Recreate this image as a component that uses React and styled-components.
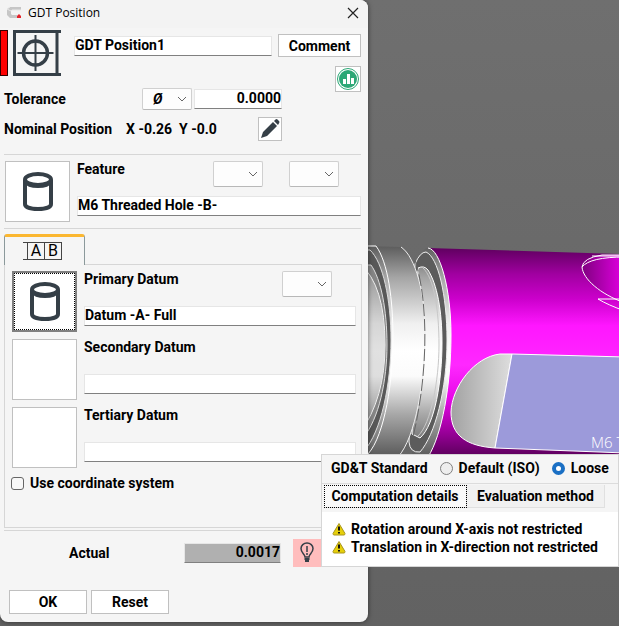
import React, { useState } from "react";
import styled, { createGlobalStyle } from "styled-components";

// STYLED COMPONENTS
const GlobalStyle = createGlobalStyle`
  * {
    box-sizing: border-box;
  }
  body {
    margin: 0;
    background: #696969;
    color: #000;
    font-family: Roboto, "Liberation Sans", sans-serif;
    font-size: 14px;
    font-weight: 700;
    line-height: 18px;
  }
  button, input, select {
    margin: 0;
    color: inherit;
    font: inherit;
  }
`;
const Page = styled.main`
  position: relative;
  min-height: 100vh;
  overflow: hidden;
`;
const Viewport = styled.svg`
  position: absolute;
  inset: 0;
  width: 100%;
  height: 100%;
`;
const Dialog = styled.section`
  position: relative;
  width: 100%;
  max-width: 368px;
  background: #f5f5f5;
  border-radius: 0 8px 8px 8px;
  box-shadow: 0 0 5px rgba(0, 0, 0, 0.5);
`;
const TitleBar = styled.header`
  display: flex;
  align-items: center;
  gap: 6px;
  height: 28px;
  padding: 0 8px 2px 6px;
  background: #f3f3f3;
  border-radius: 0 8px 0 0;
`;
const Title = styled.h1`
  flex: 1;
  margin: 0;
  font-family: "Open Sans", "Noto Sans", sans-serif;
  font-size: 12px;
  font-weight: 400;
`;
const CloseButton = styled.button`
  display: flex;
  padding: 1px;
  border: none;
  background: none;
`;
const Head = styled.div`
  display: grid;
  grid-template-columns: 1fr 83px;
  grid-template-rows: 58px auto;
  column-gap: 6px;
  padding: 2px 7px 0 0;
`;
const Identity = styled.div`
  display: flex;
  align-items: flex-start;
  gap: 5px;
`;
const Status = styled.div`
  width: 8px;
  height: 46px;
  background: #f00;
  border: 1px solid #300;
`;
const NameField = styled.div`
  flex: 1;
  padding: 6px 0 0 8px;
`;
const Actions = styled.div`
  grid-column: 2;
  grid-row: 1 / 3;
  align-self: start;
  display: flex;
  flex-direction: column;
  align-items: flex-end;
  gap: 9px;
  padding-top: 4px;
`;
const Button = styled.button`
  width: ${(p) => p.$width};
  height: ${(p) => p.$height || "24px"};
  padding: 0;
  background: #fff;
  border: 1px solid #c0c0c0;
`;
const IconButton = styled.button`
  display: grid;
  place-items: center;
  width: ${(p) => p.$size};
  height: ${(p) => p.$size};
  padding: 0;
  background: #fff;
  border: 1px solid #c0c0c0;
`;
const Input = styled.input`
  display: block;
  width: ${(p) => p.$width || "100%"};
  height: 20px;
  padding: 0 0 2px;
  outline: none;
  border: 1px solid #e6e6e6;
  border-bottom-color: #808080;
  border-radius: 0;
  background: ${(p) => (p.readOnly ? "#b0b0b0" : "#fff")};
  text-align: ${(p) => p.$align || "left"};
`;
const Fields = styled.div`
  grid-column: 1 / 3;
  grid-row: 2;
  width: 278px;
  margin-left: 4px;
`;
const FieldRow = styled.div`
  display: flex;
  align-items: center;
  gap: ${(p) => p.$gap};
  height: ${(p) => p.$height};
`;
const Label = styled.label`
  flex: 1;
  line-height: 16px;
`;
const Text = styled.span`
  white-space: pre;
`;
const SelectBox = styled.div`
  position: relative;
  width: 50px;
  height: ${(p) => p.$height};
  svg {
    position: absolute;
    right: 5px;
    top: calc(50% - 4px);
    pointer-events: none;
  }
`;
const Select = styled.select`
  display: block;
  width: 100%;
  height: 100%;
  padding: 0 18px 0 10px;
  appearance: none;
  background: #fdfdfd;
  border: 1px solid #d0d0d0;
  border-bottom-color: #b8b8b8;
  border-radius: 2px;
  font-style: italic;
`;
const Divider = styled.hr`
  height: 1px;
  margin: ${(p) => p.$margin};
  border: none;
  background: #d6d6d6;
`;
const Element = styled.div`
  display: flex;
  gap: 7px;
`;
const Thumb = styled.button`
  display: grid;
  place-items: center;
  flex: none;
  width: 65px;
  height: 61px;
  padding: 0;
  background: #fff;
  border: ${(p) => (p.$active ? "2px solid #808080" : "1px solid #c0c0c0")};
  outline: ${(p) => (p.$active ? "1px dotted #000" : "none")};
  outline-offset: -3px;
`;
const ElementBody = styled.div`
  flex: 1;
  min-width: 0;
  display: flex;
  flex-direction: column;
  justify-content: space-between;
  padding-bottom: 6px;
`;
const ElementHead = styled.div`
  display: flex;
  align-items: flex-start;
  gap: 26px;
  height: 26px;
  padding-right: ${(p) => p.$inset};
`;
const FeatureSection = styled.div`
  padding: 0 7px 0 5px;
`;
const DatumTab = styled.button`
  display: grid;
  place-items: center;
  width: 81px;
  height: 31px;
  margin-left: 4px;
  padding: 0 4px 0 0;
  position: relative;
  z-index: 1;
  margin-bottom: -1px;
  background: #f5f5f5;
  border: 1px solid #8b999b;
  border-top: 3px solid #fbb731;
  border-bottom: none;
  border-radius: 3px 3px 0 0;
`;
const Frame = styled.span`
  display: flex;
  padding-left: 4px;
  border: solid #444;
  border-width: 1px 0;
  font-size: 16px;
  font-weight: 400;
  line-height: 16px;
`;
const FrameCell = styled.span`
  width: 17px;
  border-left: 1px solid #444;
  &:last-child {
    width: 18px;
    border-right: 1px solid #444;
  }
`;
const DatumPanel = styled.div`
  display: flex;
  flex-direction: column;
  gap: 7px;
  min-height: 264px;
  margin: 0 6px 0 4px;
  padding: 6px 5px 0 7px;
  border: 1px solid #d6d6d6;
`;
const CheckRow = styled.label`
  display: flex;
  align-items: center;
  gap: 6px;
  margin-left: -1px;
  line-height: 16px;
`;
const Checkbox = styled.input`
  width: 13px;
  height: 13px;
  appearance: none;
  background: #f8f8f8;
  border: 1px solid #666;
  border-radius: 3px;
  &:checked {
    background: #1a6fc4;
  }
`;
const ActualRow = styled.div`
  display: flex;
  align-items: center;
  padding: 8px 47px 0 69px;
`;
const HintAnchor = styled.div`
  position: relative;
  margin-left: 12px;
`;
const HintButton = styled.button`
  display: grid;
  place-items: center;
  width: 28px;
  height: 28px;
  padding: 0;
  border: none;
  background: #ffbdbd;
`;
const Hint = styled.aside`
  position: absolute;
  bottom: 0;
  left: 100%;
  width: 298px;
  background: #fff;
  border: 1px solid #d6d6d6;
`;
const Standard = styled.fieldset`
  display: flex;
  align-items: center;
  gap: 12px;
  height: 29px;
  margin: 0;
  padding: 0 9px 2px;
  border: none;
  border-bottom: 1px solid #dcdcdc;
  background: #f5f5f5;
  white-space: nowrap;
`;
const RadioLabel = styled.label`
  display: flex;
  align-items: center;
  gap: 6px;
`;
const Radio = styled.input`
  width: 13px;
  height: 13px;
  appearance: none;
  border: 1px solid #808080;
  border-radius: 50%;
  background: #eee;
  &:checked {
    border: 4px solid #1a6fc4;
    background: #fff;
  }
`;
const HintTabs = styled.div`
  display: flex;
  height: 28px;
  padding: 1px 2px 4px;
  background: #f5f5f5;
`;
const HintTab = styled.button`
  padding: 0 6px;
  white-space: nowrap;
  background: ${(p) => (p.$active ? "#f9f9f9" : "#f1f1f1")};
  border: 1px solid #e0e0e0;
  border-width: 0 1px 1px 0;
  flex: ${(p) => (p.$active ? "0 0 143px" : "0 0 138px")};
  outline: ${(p) => (p.$active ? "1px dotted #000" : "none")};
  outline-offset: -1px;
`;
const Messages = styled.ul`
  margin: 0;
  padding: 8px 10px 10px;
  list-style: none;
`;
const Message = styled.li`
  display: flex;
  align-items: center;
  gap: 5px;
  white-space: nowrap;
`;
const Footer = styled.footer`
  display: flex;
  gap: 4px;
  padding: 23px 9px 8px;
`;

// ICONS
const Chevron = () => (
  <svg width="10" height="8" viewBox="0 0 10 8" fill="none" stroke="#666">
    <path d="M1 2l4 4 4-4" />
  </svg>
);

const CylinderIcon = () => (
  <svg width="32" height="42" viewBox="0 0 32 42" fill="none" stroke="#353f47">
    <path d="M3 9v24c0 3 5 5 13 5s13-2 13-5V9" strokeWidth="4" />
    <ellipse cx="16" cy="8.5" rx="13" ry="5.5" strokeWidth="4" />
    <path d="M3 11c2 4 7 5 13 5s11-1 13-5" strokeWidth="2" />
  </svg>
);

const PositionIcon = () => (
  <svg width="48" height="46" viewBox="0 0 48 46" fill="none" stroke="#353f47">
    <path d="M48 1.5H1.5v43H48M44 1v44" strokeWidth="3" />
    <circle cx="22.5" cy="23" r="12" strokeWidth="3.4" />
    <path d="M22.5 5v36M4.5 23h36" strokeWidth="2" />
  </svg>
);

const AppIcon = () => (
  <svg width="16" height="14" viewBox="0 0 16 14">
    <path d="M15 1H4L1 3v6l3 3h7V9H6L5 8V5l1-1h9z" fill="#c6c6c6" />
    <path d="M4 1L1 3l4 2 1-1h9" fill="none" stroke="#e8e8e8" />
    <path d="M13 8l2 2v2h-4v-2z" fill="#e3222a" />
  </svg>
);

const ChartIcon = () => (
  <svg width="24" height="24" viewBox="0 0 24 24">
    <circle cx="12" cy="12" r="10.5" fill="#fff" stroke="#2ca876" />
    <circle cx="12" cy="12" r="9" fill="#2ca876" />
    <path d="M7 12h3v5H7zM11 7h3v10h-3zM15 11h3v6h-3z" fill="#fff" />
  </svg>
);

const PencilIcon = () => (
  <svg width="22" height="22" viewBox="0 0 22 22" fill="#353f47">
    <path d="M2 20l2-6L14 4l4 4L8 18zM15 3l1.500-1.500q1-.8 2 0L20 3q1 1 0 2.200L19 7z" />
  </svg>
);

const BulbIcon = () => (
  <svg width="16" height="22" viewBox="0 0 16 22" fill="none" stroke="#353f47">
    <path d="M6 15c0-3-4-4-4-8.500a6 5.500 0 0 1 12 0C14 11 10 12 10 15z" strokeWidth="1.500" />
    <path d="M8 4v6M8 11v2" strokeWidth="1.500" />
    <path d="M5.500 17h5M6 19h4" strokeWidth="2" />
  </svg>
);

const WarningIcon = () => (
  <svg width="14" height="14" viewBox="0 0 14 14">
    <path
      d="M7 1.500L13 11.500Q13 13 12 13H2Q1 13 1 11.500z"
      fill="#e6cf0a"
      stroke="#a8941c"
      strokeLinejoin="round"
    />
    <path d="M7 4.500v4M7 10v1.500" stroke="#111" strokeWidth="2" />
  </svg>
);

// 3D VIEW
const Part = () => (
  <Viewport viewBox="0 0 619 626" preserveAspectRatio="xMinYMin slice">
    <defs>
      <linearGradient id="backdrop" x2="0" y2="1">
        <stop offset="0" stopColor="#6f6f6f" />
        <stop offset="1" stopColor="#626262" />
      </linearGradient>
      <linearGradient id="magenta" gradientUnits="userSpaceOnUse" x1="0" y1="249" x2="0" y2="456">
        <stop offset="0" stopColor="#620062" />
        <stop offset="0.12" stopColor="#a000a0" />
        <stop offset="0.24" stopColor="#cb00cb" />
        <stop offset="0.37" stopColor="#ff16ff" />
        <stop offset="0.56" stopColor="#ff28ff" />
        <stop offset="0.72" stopColor="#e808e8" />
        <stop offset="0.88" stopColor="#9c009c" />
        <stop offset="1" stopColor="#5c005c" />
      </linearGradient>
      <linearGradient id="steel" gradientUnits="userSpaceOnUse" x1="0" y1="246" x2="0" y2="456">
        <stop offset="0" stopColor="#5c5c5c" />
        <stop offset="0.15" stopColor="#a5a5a5" />
        <stop offset="0.37" stopColor="#f0f0f0" />
        <stop offset="0.5" stopColor="#fff" />
        <stop offset="0.62" stopColor="#fbfbfb" />
        <stop offset="0.8" stopColor="#a8a8a8" />
        <stop offset="1" stopColor="#5b5b5b" />
      </linearGradient>
      <linearGradient id="pocket">
        <stop offset="0" stopColor="#a2a2a2" />
        <stop offset="1" stopColor="#dedede" />
      </linearGradient>
      <linearGradient id="bore">
        <stop offset="0" stopColor="#800080" />
        <stop offset="1" stopColor="#e500e5" />
      </linearGradient>
    </defs>
    <rect width="619" height="626" fill="url(#backdrop)" />
    <path d="M428 248L619 254V460H428z" fill="url(#magenta)" />
    {/* collar next to the magenta body */}
    <path
      d="M417 262Q421 249 428 248C440 249 451 289 451 335C451 385 442 435 428 457H412z"
      fill="url(#steel)"
    />
    <path d="M428 248C440 249 451 289 451 335C451 385 442 435 428 457" fill="none" stroke="#fff" />
    <path
      d="M415 264Q420 252 426 252C438 257 447 295 447 340C447 390 435 435 420 452Q410 453 409 442z"
      fill="#5c5c5c"
      stroke="#eee"
    />
    <path
      d="M418 268Q424 265 428 270C437 284 442 310 442 343C442 380 435 425 420 438L412 434z"
      fill="url(#steel)"
      stroke="#fff"
    />
    <path d="M423 268C434 278 439 310 439 345C439 380 431 424 418 436" fill="none" stroke="#c8c8c8" />
    {/* wide ring */}
    <path
      d="M360 246L401 247C416 257 425 295 425 330C425 380 416 437 398 457H360z"
      fill="url(#steel)"
    />
    <path d="M401 247C416 257 425 295 425 330C425 380 416 437 398 457" fill="none" stroke="#eee" />
    <path
      d="M415 260C428 300 429 370 413 437"
      fill="none"
      stroke="#666"
      strokeDasharray="12 3"
    />
    <path d="M360 246H376C388 262 393 300 393 338C393 380 385 435 368 454H360z" fill="url(#steel)" stroke="#fff" />
    <path d="M360 250H370C383 262 391 300 391 340C391 385 381 432 364 451z" fill="#585858" stroke="#ddd" />
    <path d="M360 265H371C381 279 387 310 387 345C387 380 379 419 363 438z" fill="#858585" stroke="#ddd" />
    <path d="M360 264Q385 285 385 345Q385 398 360 433z" fill="url(#steel)" stroke="#fff" />
    <path d="M360 264Q385 285 385 345Q385 398 360 433z" fill="#888" opacity=".25" />
    {/* flat with the pocket */}
    <path
      d="M512 354H500C474 357 452 387 451 412C451 436 467 446 495 448z"
      fill="url(#pocket)"
      stroke="#fff"
    />
    <path d="M512 354L625 357V453L495 448z" fill="#9c9ada" stroke="#fff" />
    <path d="M625 255H602Q583 258 582 267C583 279 600 294 625 303z" fill="url(#bore)" stroke="#fff" />
    <path d="M582 267Q590 257 625 257M592 256H619M625 299H598Q608 305 625 311" fill="none" stroke="#fff" />
    <text x="591" y="448" fill="#fff" fontSize="15" fontWeight="300" fontFamily="Open Sans, sans-serif">
      M6 T
    </text>
  </Viewport>
);

const DropDown = ({ label, height = "26px", options = [""] }) => (
  <SelectBox $height={height}>
    <Select aria-label={label}>
      {options.map((option) => (
        <option key={option}>{option}</option>
      ))}
    </Select>
    <Chevron />
  </SelectBox>
);

const datums = [
  { id: "primary", label: "Primary Datum", value: "Datum -A- Full", filled: true },
  { id: "secondary", label: "Secondary Datum", value: "" },
  { id: "tertiary", label: "Tertiary Datum", value: "" },
];

const messages = [
  "Rotation around X-axis not restricted",
  "Translation in X-direction not restricted",
];

const App = () => {
  const [standard, setStandard] = useState("loose");
  const [tab, setTab] = useState("details");

  return (
    <Page>
      <GlobalStyle />
      <Part />
      <Dialog>
        <TitleBar>
          <AppIcon />
          <Title>GDT Position</Title>
          <CloseButton aria-label="Close">
            <svg width="12" height="12" viewBox="0 0 12 12" stroke="#222" strokeWidth="1.200">
              <path d="M1 1l10 10M11 1L1 11" />
            </svg>
          </CloseButton>
        </TitleBar>

        <Head>
          <Identity>
            <Status />
            <PositionIcon />
            <NameField>
              <Input aria-label="Name" defaultValue="GDT Position1" />
            </NameField>
          </Identity>
          <Actions>
            <Button $width="83px" $height="23px">Comment</Button>
            <IconButton $size="26px" aria-label="Statistics">
              <ChartIcon />
            </IconButton>
          </Actions>
          <Fields>
            <FieldRow $gap="2px" $height="22px">
              <Label htmlFor="tolerance">Tolerance</Label>
              <DropDown label="Zone" height="22px" options={["Ø"]} />
              <Input id="tolerance" $width="88px" $align="right" defaultValue="0.0000" />
            </FieldRow>
            <FieldRow $gap="14px" $height="38px">
              <Text>Nominal Position</Text>
              <Label as="span">
                <Text>X -0.26{"  "}Y -0.0</Text>
              </Label>
              <IconButton $size="24px" aria-label="Edit position">
                <PencilIcon />
              </IconButton>
            </FieldRow>
          </Fields>
        </Head>

        <Divider $margin="6px 7px 6px 4px" />
        <FeatureSection>
          <Element>
            <Thumb aria-label="Select feature">
              <CylinderIcon />
            </Thumb>
            <ElementBody>
              <ElementHead $inset="22px">
                <Label htmlFor="feature">Feature</Label>
                <DropDown label="Feature type" />
                <DropDown label="Feature modifier" />
              </ElementHead>
              <Input id="feature" defaultValue="M6 Threaded Hole -B-" />
            </ElementBody>
          </Element>
        </FeatureSection>
        <Divider $margin="6px 7px 5px 4px" />

        <DatumTab aria-label="Datums A B">
          <Frame>
            <FrameCell>A</FrameCell>
            <FrameCell>B</FrameCell>
          </Frame>
        </DatumTab>
        <DatumPanel>
          {datums.map((datum) => (
            <Element key={datum.id}>
              <Thumb $active={datum.filled} aria-label={datum.label}>
                {datum.filled && <CylinderIcon />}
              </Thumb>
              <ElementBody>
                <ElementHead $inset="24px">
                  <Label htmlFor={datum.id}>{datum.label}</Label>
                  {datum.filled && <DropDown label="Datum modifier" />}
                </ElementHead>
                <Input id={datum.id} defaultValue={datum.value} />
              </ElementBody>
            </Element>
          ))}
          <CheckRow>
            <Checkbox type="checkbox" />
            Use coordinate system
          </CheckRow>
        </DatumPanel>
        <Divider $margin="2px 7px 0 4px" />

        <ActualRow>
          <Label htmlFor="actual">Actual</Label>
          <Input id="actual" $width="97px" $align="right" readOnly value="0.0017" />
          <HintAnchor>
            <HintButton aria-label="Show hints">
              <BulbIcon />
            </HintButton>
            <Hint>
              <Standard>
                <span>GD&amp;T Standard</span>
                <RadioLabel>
                  <Radio
                    type="radio"
                    name="standard"
                    checked={standard === "iso"}
                    onChange={() => setStandard("iso")}
                  />
                  Default (ISO)
                </RadioLabel>
                <RadioLabel>
                  <Radio
                    type="radio"
                    name="standard"
                    checked={standard === "loose"}
                    onChange={() => setStandard("loose")}
                  />
                  Loose
                </RadioLabel>
              </Standard>
              <HintTabs>
                <HintTab $active={tab === "details"} onClick={() => setTab("details")}>
                  Computation details
                </HintTab>
                <HintTab $active={tab === "method"} onClick={() => setTab("method")}>
                  Evaluation method
                </HintTab>
              </HintTabs>
              <Messages>
                {messages.map((message) => (
                  <Message key={message}>
                    <WarningIcon />
                    {message}
                  </Message>
                ))}
              </Messages>
            </Hint>
          </HintAnchor>
        </ActualRow>

        <Footer>
          <Button $width="78px">OK</Button>
          <Button $width="78px">Reset</Button>
        </Footer>
      </Dialog>
    </Page>
  );
};

export default App;
